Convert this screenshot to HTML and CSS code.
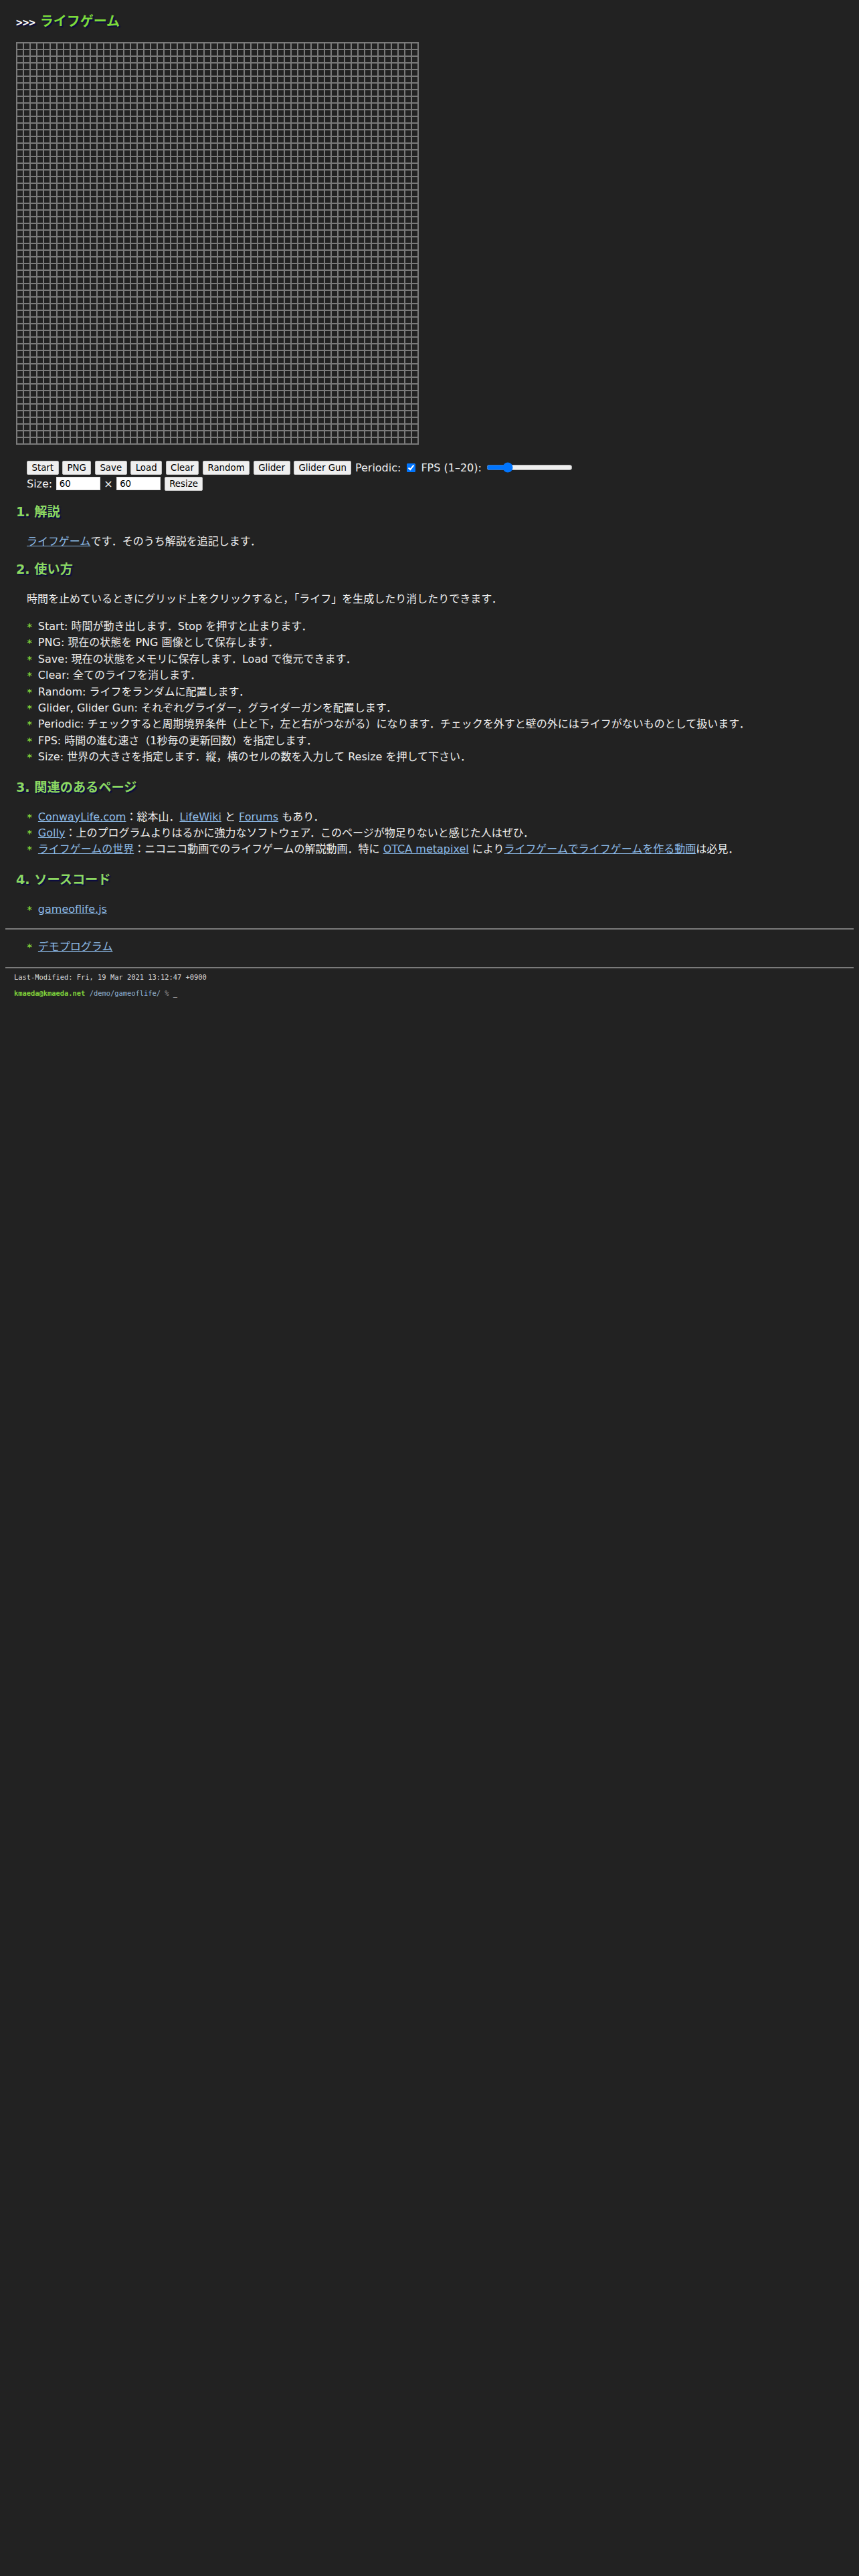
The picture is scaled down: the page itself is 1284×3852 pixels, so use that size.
FILE: index.html
```html
<!DOCTYPE html>
<html lang="ja">
<head>
    <meta charset="UTF-8">
    <meta name="viewport" content="width=device-width, initial-scale=1.0">
    <title>ライフゲーム</title>
    <link rel="stylesheet" href="styles.css">
</head>
<body>
<div class="page">
    <div class="content">
        <h1><span class="prompt">&gt;&gt;&gt;</span> ライフゲーム</h1>

        <div class="board"></div>

        <div class="controls">
            <div class="row">
                <button>Start</button>
                <button>PNG</button>
                <button>Save</button>
                <button>Load</button>
                <button>Clear</button>
                <button>Random</button>
                <button>Glider</button>
                <button>Glider Gun</button>
                <span>Periodic:</span>
                <input type="checkbox" class="check" checked>
                <span>FPS (1–20):</span>
                <input type="range" class="fps" min="1" max="20" value="5">
            </div>
            <div class="row">
                <span>Size:</span>
                <input type="text" class="size" value="60">
                <span>×</span>
                <input type="text" class="size" value="60">
                <button>Resize</button>
            </div>
        </div>

        <h2>1. 解説</h2>
        <p><a href="#">ライフゲーム</a>です．そのうち解説を追記します．</p>

        <h2>2. 使い方</h2>
        <p>時間を止めているときにグリッド上をクリックすると，「ライフ」を生成したり消したりできます．</p>
        <ul class="list">
            <li>Start: 時間が動き出します．Stop を押すと止まります．</li>
            <li>PNG: 現在の状態を PNG 画像として保存します．</li>
            <li>Save: 現在の状態をメモリに保存します．Load で復元できます．</li>
            <li>Clear: 全てのライフを消します．</li>
            <li>Random: ライフをランダムに配置します．</li>
            <li>Glider, Glider Gun: それぞれグライダー，グライダーガンを配置します．</li>
            <li>Periodic: チェックすると周期境界条件（上と下，左と右がつながる）になります．チェックを外すと壁の外にはライフがないものとして扱います．</li>
            <li>FPS: 時間の進む速さ（1秒毎の更新回数）を指定します．</li>
            <li>Size: 世界の大きさを指定します．縦，横のセルの数を入力して Resize を押して下さい．</li>
        </ul>

        <h2>3. 関連のあるページ</h2>
        <ul class="list">
            <li><a href="#">ConwayLife.com</a>：総本山．<a href="#">LifeWiki</a> と <a href="#">Forums</a> もあり．</li>
            <li><a href="#">Golly</a>：上のプログラムよりはるかに強力なソフトウェア．このページが物足りないと感じた人はぜひ．</li>
            <li><a href="#">ライフゲームの世界</a>：ニコニコ動画でのライフゲームの解説動画．特に <a href="#">OTCA metapixel</a> により<a href="#">ライフゲームでライフゲームを作る動画</a>は必見．</li>
        </ul>

        <h2>4. ソースコード</h2>
        <ul class="list">
            <li><a href="#">gameoflife.js</a></li>
        </ul>
    </div>

    <hr>
    <ul class="list nav">
        <li><a href="#">デモプログラム</a></li>
    </ul>
    <hr>

    <footer class="footer">
        <div>Last-Modified: Fri, 19 Mar 2021 13:12:47 +0900</div>
        <div class="shell"><span class="host">kmaeda@kmaeda.net</span> <span class="path">/demo/gameoflife/</span> <span class="sign">%</span> <span class="cursor">_</span></div>
    </footer>
</div>
</body>
</html>
```

FILE: styles.css
```css
body {
    margin: 0;
    background: #222;
    color: #eee;
    font-family: "DejaVu Sans", "Noto Sans CJK JP", sans-serif;
    font-size: 16px;
}
.page {
    padding: 8px;
    display: flow-root;
}
.content {
    padding: 0 16px;
    display: flow-root;
}
h1 {
    margin: 8px 0 15px;
    font-size: 20px;
    line-height: 32px;
    color: #7ddc3a;
    text-shadow: 2px 2px 1px #0c0c44;
}
h1 .prompt {
    font-family: "DejaVu Sans Mono", monospace;
    font-size: 16px;
    color: #fff;
    line-height: 0;
}
h2 {
    margin: 15px 0 18px;
    font-size: 19.2px;
    line-height: 29px;
    color: #8cd860;
    text-shadow: 2px 2px 1px #0c0c44;
}
a {
    color: #8dbbe8;
    text-decoration: underline;
}
p {
    margin: 0 0 15px 16px;
    line-height: 24px;
}
.board {
    width: 602px;
    height: 602px;
    background-image:
        linear-gradient(to right, #7a7a7a 2px, transparent 2px),
        linear-gradient(to bottom, #7a7a7a 2px, transparent 2px);
    background-size: 10px 10px;
    margin-bottom: 22px;
}
.controls {
    margin: 0 0 16px 16px;
}
.row {
    display: flex;
    align-items: center;
    gap: 5.5px;
    height: 24px;
}
button {
    font-family: "DejaVu Sans", sans-serif;
    font-size: 13.333px;
    color: #000;
    background: #efefef;
    border: 1px solid #c4c4c4;
    border-radius: 2px;
    padding: 0 6.5px;
    height: 21px;
}
.check {
    margin: 0 2.5px 0 3.5px;
    width: 13px;
    height: 13px;
}
.fps {
    margin: 0 2px;
    width: 129px;
}
.size {
    box-sizing: border-box;
    width: 66px;
    height: 20px;
    padding: 0 4px;
    border: 1px solid #ddd;
    background: #fff;
    font-family: "DejaVu Sans", sans-serif;
    font-size: 13.333px;
}
.list {
    list-style: none;
    margin: 17px 0 18px 16px;
    padding: 0;
}
.list li {
    height: 24.4px;
    line-height: 24.4px;
    white-space: nowrap;
}
.content .list:last-child {
    margin-bottom: 16px;
}
.list li::before {
    content: "* ";
    color: #7fd13b;
    font-family: "DejaVu Sans Mono", monospace;
    font-weight: bold;
    font-size: 14px;
    line-height: 0;
}
hr {
    margin: 0;
    border: 0;
    border-top: 2px solid #7a7a7a;
}
.nav {
    margin: 14px 0 18px 32px;
}
.footer {
    padding: 7px 13px;
    font-family: "DejaVu Sans Mono", monospace;
    font-size: 10.4px;
    line-height: 12px;
    color: #ddd;
}
.shell {
    margin-top: 12px;
}
.host {
    color: #7fd13b;
    font-weight: bold;
}
.path {
    color: #94b4d4;
}
.sign {
    color: #999;
}
.cursor {
    color: #fff;
}
```
